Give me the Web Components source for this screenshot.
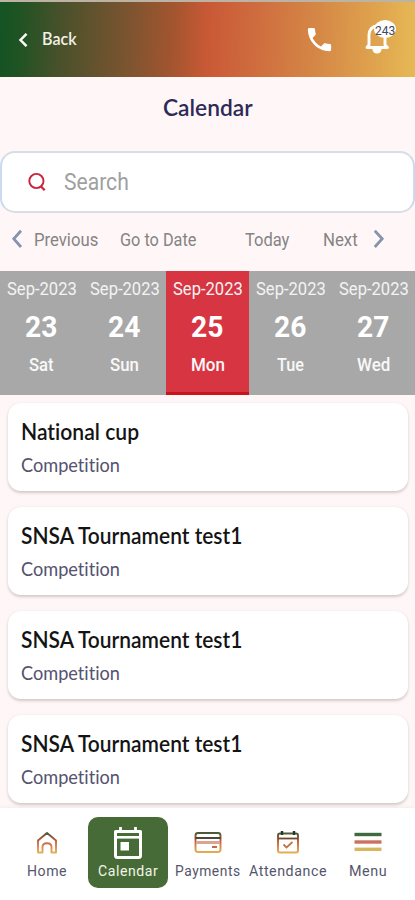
<!DOCTYPE html>
<html lang="en">
<head>
<meta charset="utf-8">
<title>Calendar</title>
<style>
html, body { margin: 0; height: 100%; overflow: hidden; background: #fff7f7; }
</style>
</head>
<body>
<calendar-app></calendar-app>
<script>
/* Registers an element whose shadow root is cloned from a template. */
const define = (name, html, setup) => {
  const tpl = document.createElement('template');
  tpl.innerHTML = html;
  customElements.define(name, class extends HTMLElement {
    connectedCallback() {
      if (this.shadowRoot) return;
      this.attachShadow({ mode: 'open' }).append(tpl.content.cloneNode(true));
      if (setup) setup(this, this.shadowRoot);
    }
  });
};

/* A one-line label condensed to the width given in its "w" attribute. */
define('fit-text', `
<style>
:host { display: block; flex: none; white-space: nowrap; }
span { display: inline-block; transform-origin: 0 50%; vertical-align: top; font-variant-ligatures: none; }
</style><span><slot></slot></span>`, (el, root) => {
  const w = +el.getAttribute('w');
  const span = root.querySelector('span');
  el.style.width = w + 'px';
  span.style.transform = `scaleX(${w / span.offsetWidth})`;
});

define('app-header', `
<style>
:host { display: flex; align-items: flex-start; box-sizing: border-box; height: 77px; border-top: 2px solid #bdb3a5;
  background: linear-gradient(92deg, #145423 0%, #205323 5%, #46512a 14%, #7c5430 31%, #a4552f 42%, #c95936 50%, #cf6d3f 62%, #d58746 76%, #dfa34e 90%, #e6b955 100%); color: #fff; }
.chev { margin: 30px 0 0 18px; }
fit-text { font: 600 17.500px/26px Lato, sans-serif; margin: 24px 0 0 13px; color: #f4f2e8; }
.phone { margin: 21.5px 0 0 227px; }
.bell { position: relative; margin: 18px 0 0 29px; width: 40px; height: 36px; }
.badge { position: absolute; left: 10px; top: 0; width: 22px; height: 18px; border-radius: 50%; background: #fff; }
.badge fit-text { font: 400 12px/21px Roboto, sans-serif; margin: 1px 0 0 1px; color: #43485a; }
svg { display: block; flex: none; }
</style>
<svg class="chev" width="11" height="16" viewBox="0 0 11 16"><path d="M8.5 1.8 2.5 8l6 6.2" fill="none" stroke="#fff" stroke-width="2.5"/></svg>
<fit-text w="35">Back</fit-text>
<svg class="phone" width="31" height="31" viewBox="0 0 24 24"><path fill="#fff" d="M6.62 10.79c1.44 2.83 3.76 5.14 6.59 6.59l2.2-2.2c.27-.27.67-.36 1.02-.24 1.12.37 2.33.57 3.57.57.55 0 1 .45 1 1V20c0 .55-.45 1-1 1C10.61 21 3 13.39 3 4c0-.55.45-1 1-1h3.5c.55 0 1 .45 1 1 0 1.25.2 2.45.57 3.57.11.35.03.74-.25 1.02l-2.2 2.2z"/></svg>
<div class="bell">
<svg width="34" height="36" viewBox="0 0 34 36"><path d="M3 27.500 5 25V15c0-5.500 3.500-9 8-9s8 3.500 8 9v10l2.500 2.500z" fill="none" stroke="#fff" stroke-width="2.900" stroke-linejoin="round"/><path d="M8.500 28h9v1.500a4.500 4 0 0 1-9 0z" fill="#fff"/></svg>
<div class="badge"><fit-text w="20">243</fit-text></div>
</div>`);

define('search-field', `
<style>
:host { display: flex; align-items: center; box-sizing: border-box; height: 62px; border: 2px solid #dadde5; border-left-color: #ccdaf0; border-right-color: #ccdaf0; border-radius: 15px; background: #fff; padding-left: 26px; }
svg { flex: none; }
fit-text { font: 400 24px/30px Roboto, sans-serif; color: #a0a0a0; margin-left: 17px; }
</style>
<svg width="19" height="20" viewBox="0 0 19 20"><circle cx="8.400" cy="9" r="7.100" fill="none" stroke="#c9243b" stroke-width="1.900"/><path d="m12.500 14 4.200 4.300" stroke="#c9243b" stroke-width="2.200"/></svg>
<fit-text w="65"><slot></slot></fit-text>`);

define('date-nav', `
<style>
:host { display: flex; align-items: center; height: 58px; box-sizing: border-box; padding: 0 0 5px 11px; color: #858383; font: 400 18px/26px Roboto, sans-serif; }
svg { flex: none; margin-top: -2px; }
</style>
<svg width="12" height="20" viewBox="0 0 12 20"><path d="M10 1.800 2.800 9.800 10 18" fill="none" stroke="#8792ae" stroke-width="2.800"/></svg>
<fit-text w="64" style="margin-left:11px">Previous</fit-text>
<fit-text w="76" style="margin-left:22px">Go to Date</fit-text>
<fit-text w="44" style="margin-left:49px">Today</fit-text>
<fit-text w="34.500" style="margin-left:33.500px">Next</fit-text>
<svg style="margin-left:16px" width="12" height="20" viewBox="0 0 12 20"><path d="m1.800 1.800 7.400 8-7.400 8.200" fill="none" stroke="#8792ae" stroke-width="2.800"/></svg>`);

/* Five days in a row; the selected one is red. */
customElements.define('day-strip', class extends HTMLElement {
  connectedCallback() {
    const root = this.attachShadow({ mode: 'open' });
    root.innerHTML = `<style>:host { display: grid; grid-template-columns: repeat(5, 83px); height: 124px; }
      .c { display: flex; flex-direction: column; align-items: center; box-sizing: border-box; background: #a8a8a8; color: #fff; padding-top: 5px; }
      .sel { background: #d83543; border-bottom: 3px solid #c9141b; }
      .m { font: 400 18px/26px Roboto, sans-serif; color: #f3f3f3; }
      .n { font: 700 29.500px/36px Roboto, sans-serif; margin-top: 7px; }
      .d { font: 500 18px/26px Roboto, sans-serif; margin-top: 7px; color: #f8f8f8; }</style>` +
      [[23, 'Sat', 25], [24, 'Sun', 29], [25, 'Mon', 34], [26, 'Tue', 27], [27, 'Wed', 33]].map(([n, d, w]) =>
        `<div class="c ${n === 25 ? 'sel' : ''}"><fit-text class="m" w="70">Sep-2023</fit-text><fit-text class="n" w="32.500">${n}</fit-text><fit-text class="d" w="${w}">${d}</fit-text></div>`).join('');
  }
});

define('event-card', `
<style>
:host { display: block; box-sizing: border-box; height: 88px; border-radius: 13px; background: #fff; box-shadow: 0 1.500px 3px rgba(90,70,70,.26); padding: 13px 0 0 13px; }
.t { font: 600 22px/32px Lato, sans-serif; color: #141414; }
.s { font: 400 18.500px/26px Lato, sans-serif; color: #54526f; margin-top: 4px; }
</style>
<fit-text class="t"><slot></slot></fit-text>
<fit-text class="s" w="99">Competition</fit-text>`, (el, root) => {
  const t = root.querySelector('.t'), w = +el.getAttribute('w');
  t.style.width = w + 'px';
  const s = t.shadowRoot.querySelector('span');
  s.style.transform = 'none';
  s.style.transform = `scaleX(${w / s.offsetWidth})`;
});

define('nav-item', `
<style>
:host { display: flex; flex-direction: column; align-items: center; box-sizing: border-box; width: 80px; height: 71px; color: #55566c; font: 400 15.500px/21px Roboto, sans-serif; letter-spacing: .6px; border-radius: 10px; }
:host([active]) { background: #466b37; color: #f1f5e8; }
.i { height: 44px; display: flex; align-items: center; padding-top: 8px; box-sizing: border-box; }
:host([active]) .i { padding-top: 7px; }
</style>
<div class="i"><slot name="icon"></slot></div>
<slot></slot>`);

define('tab-bar', `
<style>
:host { display: flex; justify-content: flex-start; box-sizing: border-box; height: 92px; background: #fff; padding: 9px 0 0 7px; position: relative; box-shadow: 0 -1px 3px rgba(120,90,90,.08); }
nav-item { margin-right: .3px; flex: none; }
svg { display: block; }
</style>
<svg width="0" height="0" style="position:absolute"><defs><linearGradient id="g" gradientUnits="userSpaceOnUse" x1="0" y1="1" x2="0" y2="23"><stop offset="0" stop-color="#315b38"/><stop offset=".35" stop-color="#a2583a"/><stop offset=".6" stop-color="#d2764c"/><stop offset="1" stop-color="#e4b154"/></linearGradient></defs></svg>
<nav-item><svg slot="icon" width="24" height="26" viewBox="0 0 24 26"><path d="M3 10.500 12 3l9 7.500v12h-4.500v-5.500c0-5-9-5-9 0v5.500H3z" fill="none" stroke="url(#g)" stroke-width="1.900" stroke-linejoin="round"/></svg><fit-text w="40">Home</fit-text></nav-item>
<nav-item active style="margin-left:1px"><svg slot="icon" width="32" height="34" viewBox="0 0 32 34"><path d="M3.500 5.500h25v24a2 2 0 0 1-2 2h-21a2 2 0 0 1-2-2z" fill="none" stroke="#fff" stroke-width="3" stroke-linejoin="round"/><path d="M3.500 11.300h25" stroke="#fff" stroke-width="2.600"/><path d="M8.500 1v5M23.500 1v5" stroke="#fff" stroke-width="2.800"/><path d="M8.500 16h8.500v8.500h-8.500z" fill="#fff"/></svg><fit-text w="60">Calendar</fit-text></nav-item>
<nav-item style="margin-left:-.6px"><svg slot="icon" width="30" height="26" viewBox="0 0 30 26"><rect x="2.500" y="3" width="25" height="19" rx="2.500" fill="none" stroke="url(#g)" stroke-width="1.900"/><path d="M2.500 8h25" stroke="#3b3420" stroke-width="1.800"/><path d="M3 12.500h24" stroke="#dfa391" stroke-width="3"/><path d="M19 17h5" stroke="#c66a43" stroke-width="2"/></svg><fit-text w="66">Payments</fit-text></nav-item>
<nav-item><svg slot="icon" width="26" height="26" viewBox="0 0 26 26"><rect x="3" y="3.500" width="20" height="19" rx="2" fill="none" stroke="url(#g)" stroke-width="2"/><path d="M3 8.500h20" stroke="#74472d" stroke-width="1.800"/><path d="M7 1v4M19 1v4" stroke="#173b2b" stroke-width="2.400"/><path d="m8.500 14.500 3 3 6-5.500" fill="none" stroke="#c57449" stroke-width="1.800"/></svg><fit-text w="78">Attendance</fit-text></nav-item>
<nav-item style="margin-left:-.6px"><svg slot="icon" width="28" height="26" viewBox="0 0 28 26"><path d="M.5 4.500h27" stroke="#42683f" stroke-width="3.400"/><path d="M.5 12h27" stroke="#ce705d" stroke-width="3.400"/><path d="M.5 19.300h27" stroke="#d9b55b" stroke-width="3.400"/></svg><fit-text w="38">Menu</fit-text></nav-item>`);

define('calendar-app', `
<style>
:host { display: flex; flex-direction: column; width: 415px; height: 900px; background: #fff7f7; overflow: hidden; }
:host > * { flex: none; }
.title { height: 74px; box-sizing: border-box; display: flex; justify-content: center; padding-top: 14px; font: 600 23.500px/32px Lato, sans-serif; color: #2d2b57; }
main { height: 413px; box-sizing: border-box; padding: 8px 7px 0 8px; display: flex; flex-direction: column; gap: 16px; overflow: hidden; }
main > * { flex: none; }
</style>
<app-header></app-header>
<div class="title"><fit-text w="90">Calendar</fit-text></div>
<search-field>Search</search-field>
<date-nav></date-nav>
<day-strip></day-strip>
<main>
<event-card w="118">National cup</event-card>
<event-card w="221">SNSA Tournament test1</event-card>
<event-card w="221">SNSA Tournament test1</event-card>
<event-card w="221">SNSA Tournament test1</event-card>
</main>
<tab-bar></tab-bar>`);
</script>
</body>
</html>
